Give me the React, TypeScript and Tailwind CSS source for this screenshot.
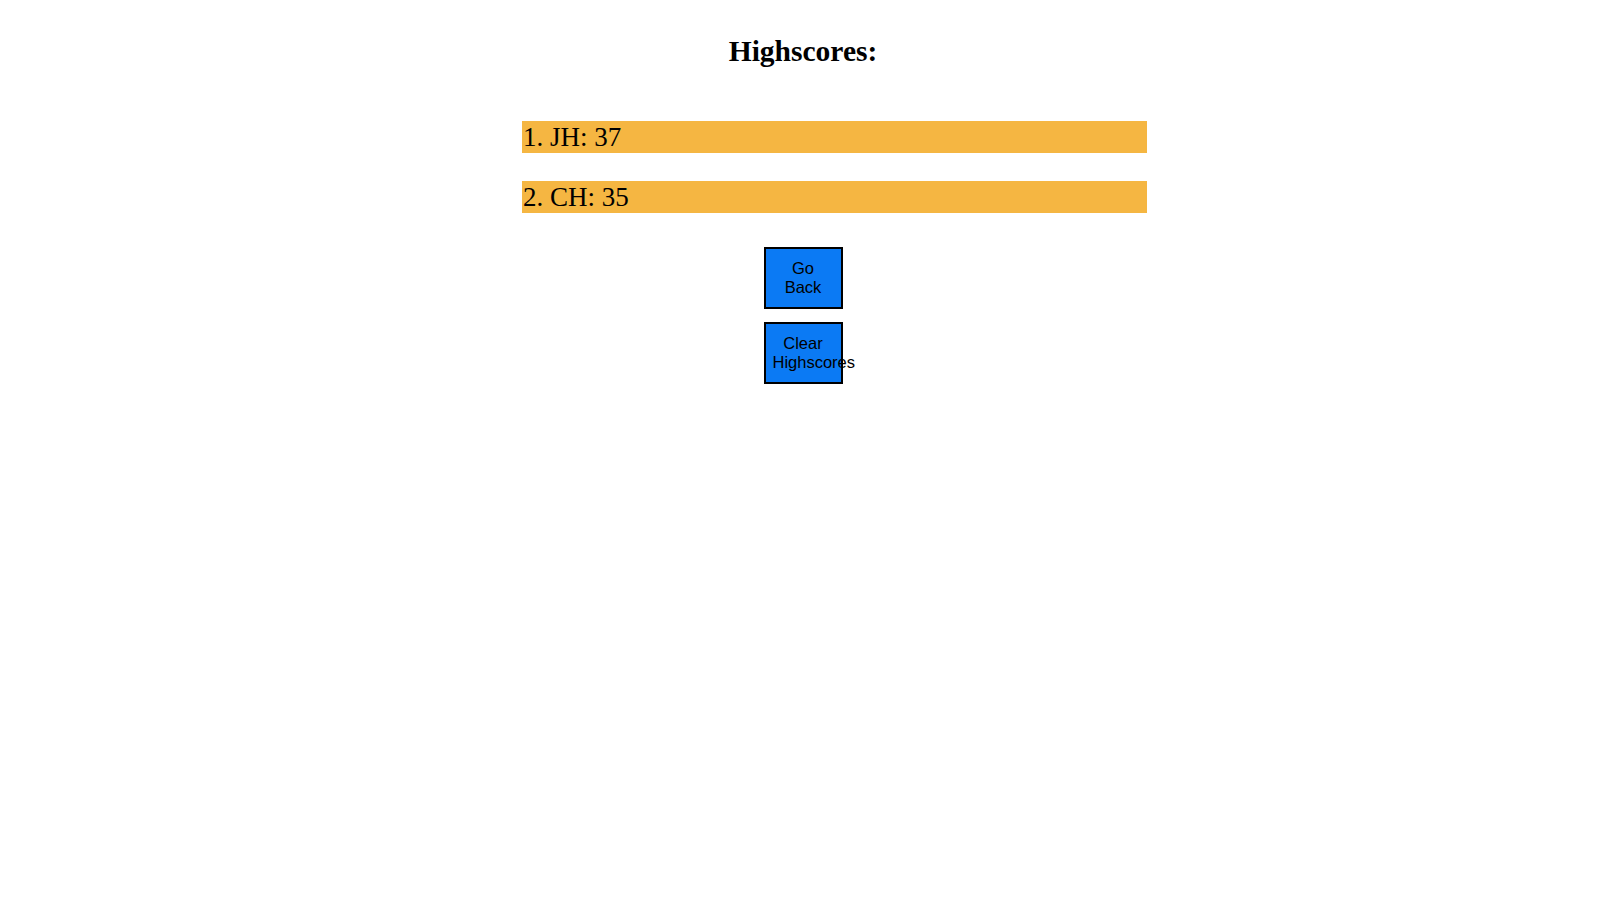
import React from "react";

export default function App() {
  const scores = ["1. JH: 37", "2. CH: 35"];
  return (
    <div className="w-full min-h-screen bg-white text-black font-['Liberation_Serif','Times_New_Roman',serif]">
      <h1 className="text-center text-[29.5px] font-bold leading-[34px] pt-[34px]">Highscores:</h1>
      <div className="pl-[522px] pt-[53px] flex flex-col gap-[28px]">
        {scores.map((s) => (
          <div key={s} className="w-[625px] h-[32px] bg-[#f5b642] text-[27px] leading-[32px] pl-[1px]">
            {s}
          </div>
        ))}
      </div>
      <div className="flex flex-col items-center gap-[13px] pt-[34px] font-['Liberation_Sans',Arial,sans-serif]">
        <button className="w-[79px] h-[62px] border-2 border-black bg-[#0b7af4] px-[7px] text-[16.5px] leading-[19.5px] text-center overflow-visible">
          Go Back
        </button>
        <button className="w-[79px] h-[62px] border-2 border-black bg-[#0b7af4] px-[7px] text-[16.5px] leading-[19.5px] text-center overflow-visible">
          Clear Highscores
        </button>
      </div>
    </div>
  );
}
